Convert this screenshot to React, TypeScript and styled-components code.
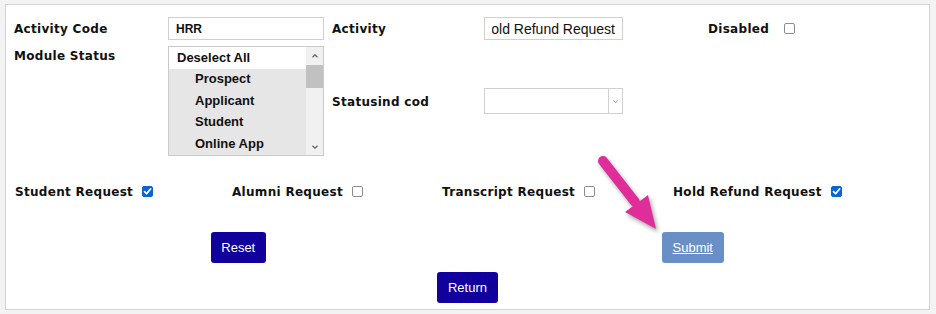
import React from "react";
import styled, { createGlobalStyle } from "styled-components";

const Global = createGlobalStyle`
  html, body { margin: 0; padding: 0; background: #f3f3f3; }
  body { font-family: "Liberation Sans", Arial, sans-serif; color: #111; }
  * { box-sizing: border-box; }
`;

const Page = styled.div`
  padding: 4px 0 0 5px;
`;

const Panel = styled.div`
  position: relative;
  width: 925px;
  height: 306px;
  background: #fff;
  border: 1px solid #d3d3d3;
  display: flex;
  flex-direction: column;
`;

const TopGrid = styled.div`
  display: grid;
  grid-template-columns: 154px 164px 152px 224px 76px auto;
  grid-template-rows: 23px 110px;
  row-gap: 6px;
  padding: 12px 0 0 8px;
  align-items: center;
`;

const Label = styled.label<{ $top?: boolean }>`
  font-family: "DejaVu Sans", Verdana, sans-serif;
  font-weight: bold;
  font-size: 12px;
  letter-spacing: 0.3px;
  line-height: 16px;
  padding-top: 1px;
  color: #111;
  white-space: nowrap;
  align-self: ${(p) => (p.$top ? "start" : "center")};
  margin-top: ${(p) => (p.$top ? "1px" : "0")};
`;

const TextBox = styled.div<{ $w: number }>`
  width: ${(p) => p.$w}px;
  height: 23px;
  border: 1px solid #d0d0d0;
  padding: 0 7px;
  display: flex;
`;

const FieldText = styled.div<{ $bold?: boolean; $end?: boolean }>`
  flex: 1;
  display: flex;
  align-items: center;
  justify-content: ${(p) => (p.$end ? "flex-end" : "flex-start")};
  overflow: hidden;
  font-family: "Liberation Sans", Arial, sans-serif;
  font-size: ${(p) => (p.$bold ? "12px" : "14px")};
  font-weight: ${(p) => (p.$bold ? "bold" : "normal")};
  white-space: nowrap;
  color: #111;
`;

const ListBox = styled.div`
  width: 156px;
  height: 110px;
  border: 1px solid #cacaca;
  display: flex;
  align-self: start;
  overflow: hidden;
`;

const Options = styled.div`
  flex: 1;
  display: flex;
  flex-direction: column;
`;

const Option = styled.div<{ $head?: boolean }>`
  height: ${(p) => (p.$head ? "22px" : "21.5px")};
  line-height: ${(p) => (p.$head ? "21px" : "20.5px")};
  background: ${(p) => (p.$head ? "#fff" : "#e6e6e6")};
  padding-left: ${(p) => (p.$head ? "8px" : "26px")};
  font-family: "Liberation Sans", Arial, sans-serif;
  font-weight: bold;
  font-size: 13px;
  color: #111;
  white-space: nowrap;
`;

const ScrollBar = styled.div`
  width: 17px;
  display: flex;
  flex-direction: column;
  background: #f1f1f1;
`;

const ScrollBtn = styled.div`
  height: 17px;
  display: flex;
  align-items: center;
  justify-content: center;
  color: #606060;
`;

const Thumb = styled.div`
  height: 23px;
  margin: 1px 0 0;
  background: #c1c1c1;
`;

const Track = styled.div`
  flex: 1;
`;

const Select = styled.div`
  width: 139px;
  height: 26px;
  border: 1px solid #d0d0d0;
  display: flex;
  justify-content: flex-end;
`;

const SelectArrow = styled.div`
  width: 14px;
  border-left: 1px solid #d0d0d0;
  display: flex;
  align-items: center;
  justify-content: center;
  color: #a8a8a8;
`;

const Check = styled.span<{ $on?: boolean }>`
  display: inline-flex;
  align-items: center;
  justify-content: center;
  width: 11px;
  height: 11px;
  border-radius: 2px;
  border: 1px solid ${(p) => (p.$on ? "#0b63d6" : "#8d8d8d")};
  background: ${(p) => (p.$on ? "#0b63d6" : "#fff")};
  flex: none;
`;

const CheckCell = styled.div`
  display: flex;
  align-items: center;
  gap: 9px;
`;

const CheckRow = styled.div`
  display: grid;
  grid-template-columns: 217px 210px 231px auto;
  padding-left: 9px;
  margin-top: 27px;
  height: 16px;
  align-items: center;
`;

const ButtonRow = styled.div`
  display: grid;
  grid-template-columns: 1fr 1fr;
  justify-items: center;
  padding: 0 9px 0 5px;
  margin-top: 33px;
`;

const ReturnRow = styled.div`
  display: flex;
  justify-content: center;
  margin-top: 9px;
`;

const Button = styled.button<{ $light?: boolean }>`
  height: 31px;
  padding: 0 ${(p) => (p.$light ? "11px" : "10.5px")};
  border: none;
  border-radius: 3px;
  background: ${(p) => (p.$light ? "#6a8fc6" : "#12009c")};
  color: #fff;
  font-family: "Liberation Sans", Arial, sans-serif;
  font-size: 13px;
  text-decoration: ${(p) => (p.$light ? "underline" : "none")};
  cursor: pointer;
`;

const ArrowSvg = styled.svg`
  position: absolute;
  left: 584px;
  top: 145px;
  overflow: visible;
  filter: drop-shadow(2px 3px 2px rgba(0, 0, 0, 0.35));
`;

const Tick = () => (
  <svg width="9" height="9" viewBox="0 0 9 9">
    <path d="M1.5 4.6 L3.6 6.6 L7.6 2" fill="none" stroke="#fff" strokeWidth="1.7" strokeLinecap="round" strokeLinejoin="round" />
  </svg>
);

const Box = ({ on }: { on?: boolean }) => <Check $on={on}>{on && <Tick />}</Check>;

const Chevron = ({ up, size = 8 }: { up?: boolean; size?: number }) => (
  <svg width={size} height={size} viewBox="0 0 8 8">
    <path d={up ? "M1.5 5.2 L4 2.8 L6.5 5.2" : "M1.5 2.8 L4 5.2 L6.5 2.8"} fill="none" stroke="currentColor" strokeWidth="1.2" />
  </svg>
);

export default function App() {
  return (
    <>
      <Global />
      <Page>
        <Panel>
          <TopGrid>
            <Label>Activity Code</Label>
            <TextBox $w={156}><FieldText $bold>HRR</FieldText></TextBox>
            <Label>Activity</Label>
            <TextBox $w={139}><FieldText $end>Hold Refund Request</FieldText></TextBox>
            <Label>Disabled</Label>
            <Box />

            <Label $top>Module Status</Label>
            <ListBox>
              <Options>
                <Option $head>Deselect All</Option>
                <Option>Prospect</Option>
                <Option>Applicant</Option>
                <Option>Student</Option>
                <Option>Online App</Option>
              </Options>
              <ScrollBar>
                <ScrollBtn><Chevron up /></ScrollBtn>
                <Thumb />
                <Track />
                <ScrollBtn><Chevron /></ScrollBtn>
              </ScrollBar>
            </ListBox>
            <Label>Statusind cod</Label>
            <Select>
              <SelectArrow><Chevron size={7} /></SelectArrow>
            </Select>
          </TopGrid>

          <CheckRow>
            <CheckCell><Label>Student Request</Label><Box on /></CheckCell>
            <CheckCell><Label>Alumni Request</Label><Box /></CheckCell>
            <CheckCell><Label>Transcript Request</Label><Box /></CheckCell>
            <CheckCell><Label>Hold Refund Request</Label><Box on /></CheckCell>
          </CheckRow>

          <ButtonRow>
            <Button>Reset</Button>
            <Button $light>Submit</Button>
          </ButtonRow>

          <ReturnRow>
            <Button>Return</Button>
          </ReturnRow>

          <ArrowSvg width="80" height="90" viewBox="0 0 80 90">
            <line x1="13" y1="11" x2="45" y2="52" stroke="#df2e9a" strokeWidth="10" strokeLinecap="round" />
            <polygon points="35,62 58,45 66,79" fill="#df2e9a" />
          </ArrowSvg>
        </Panel>
      </Page>
    </>
  );
}
